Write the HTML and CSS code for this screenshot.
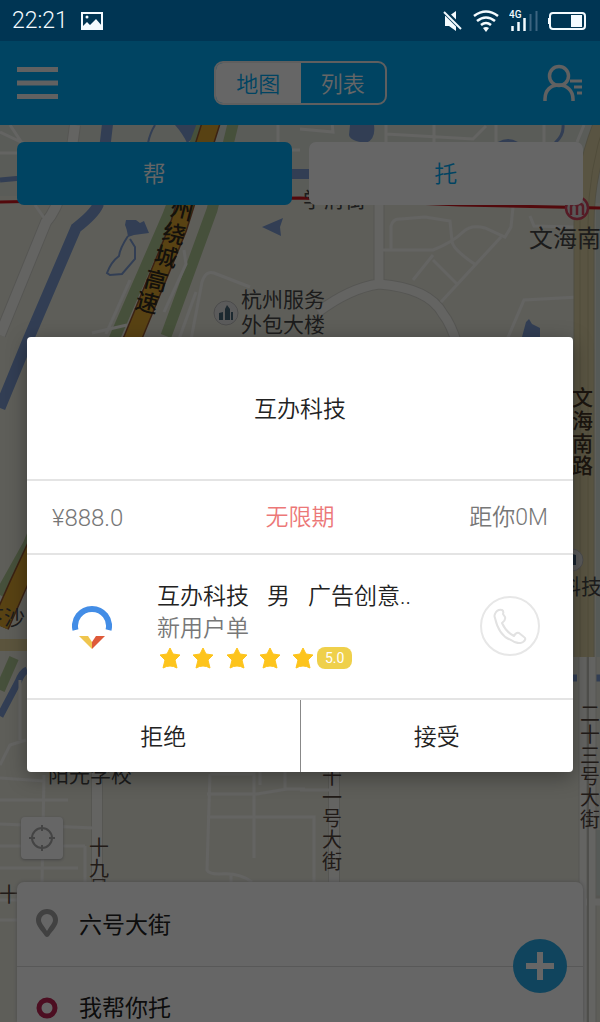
FILE: index.html
```html
<!DOCTYPE html>
<html lang="zh-CN">
<head>
<meta charset="utf-8">
<meta name="viewport" content="width=device-width, initial-scale=1">
<title>互办</title>
<link rel="stylesheet" href="styles.css">
</head>
<body>
<div class="phone">
  <div class="status">
    <div class="status-group">
      <span class="clock">22:21</span>
      <svg class="icon" width="22" height="18" viewBox="0 0 22 18" aria-hidden="true">
        <rect x="1" y="1" width="20" height="16" fill="none" stroke="currentColor" stroke-width="2"/>
        <path d="M2 17v-3l4-4 3 3 6-6 6 7v3z" fill="currentColor"/>
        <circle cx="6" cy="5" r="1.500" fill="currentColor"/>
      </svg>
    </div>
    <div class="status-group status-right">
      <svg width="20" height="22" viewBox="0 0 20 22" aria-hidden="true">
        <path d="M2 6h4l7-5v20l-7-5H2z" fill="currentColor"/>
        <path d="M0 0l19 19" stroke="#003553" stroke-width="5"/>
        <path d="M1 2l17 17" stroke="currentColor" stroke-width="2"/>
      </svg>
      <svg width="28" height="22" viewBox="0 0 28 22" aria-hidden="true">
        <g fill="none" stroke="currentColor" stroke-width="2.6">
          <path d="M2 6q12-9 24 0M5 11q9-7 18 0M9 15q5-4 10 0"/>
        </g>
        <path d="M11 18q3-2 6 0l-3 4z" fill="currentColor"/>
      </svg>
      <svg width="30" height="22" viewBox="0 0 30 22" aria-hidden="true">
        <text x="0" y="8" class="net">4G</text>
        <path d="M3.500 21v-5M9.500 21v-9M15.500 21V8" stroke="currentColor" stroke-width="2.500"/>
        <path d="M21.500 21V4M27.500 21V1" stroke="#3d6480" stroke-width="2"/>
      </svg>
      <svg width="38" height="20" viewBox="0 0 38 20" aria-hidden="true">
        <rect x="2" y="2" width="35" height="16" rx="3" fill="none" stroke="currentColor" stroke-width="2"/>
        <path d="M0 7h2v6H0zM23 4h11v12H23z" fill="currentColor"/>
      </svg>
    </div>
  </div>

  <div class="app">
    <header class="bar">
      <button class="icon-btn" aria-label="菜单">
        <svg width="41" height="32" viewBox="0 0 41 32"><path d="M0 2.500h41M0 16h41M0 29.500h41" stroke="currentColor" stroke-width="5"/></svg>
      </button>
      <div class="switch">
        <button class="switch-item is-on">地图</button>
        <button class="switch-item">列表</button>
      </div>
      <button class="icon-btn" aria-label="联系人">
        <svg width="40" height="38" viewBox="0 0 40 38" fill="none" stroke="currentColor" stroke-width="3.500">
          <circle cx="16" cy="12" r="9.500"/>
          <path d="M2 37v-2C2 26 8 21 16 21s14 6 14 14v2"/>
          <path d="M27 17h12M31 23h8M34 29h5" stroke-width="3"/>
        </svg>
      </button>
    </header>

    <main class="map-area">
      <svg class="map" viewBox="0 125 600 897" preserveAspectRatio="xMidYMin slice" aria-hidden="true">
        <rect y="125" width="600" height="897" fill="#ebebdf"/>
        <path d="M0 125h600v78H0z" fill="#e0e5dc"/>
        <path d="M0 196h280l320 8v6L0 210z" fill="#ebebdf"/>
        <g fill="none" stroke="#7d9cd2">
          <path d="M108 120L98 205Q94 214 76 228L28 340 0 408" stroke-width="11"/>
          <path d="M0 180l22-2" stroke-width="5"/>
          <path d="M288 174h24" stroke-width="10"/>
          <path d="M155 125q-5 8-7 18M128 236q-8 12-9 20-8 6-12 17l3 2 12-1 13-15v-12l-5-8" stroke-width="2"/>
          <path d="M27 670Q22 672 18 682L0 716" stroke-width="7"/>
          <path d="M572 678h5M592 678h8" stroke-width="7"/>
          <path d="M563 125q1 10-8 18" stroke-width="3"/>
        </g>
        <g fill="#7d9cd2">
          <path d="M175 125h22q-2 14-10 18-4-9-12-18zM350 125h24q2 14-8 18-16-2-17-8zM498 142q10-6 20 0zM583 158h6v12l-6 3zM126 220h10l4 3 4-2 5 12-15 2-6 2q-1-8-3-12zM262 227l21-9-3 9 1 9zM526 322l3-3 3 5 8 4v9h-18z"/>
        </g>
        <g fill="none" stroke="#b0c793">
          <path d="M204 120L168 215 118 330 28 545 0 595" stroke-width="11"/>
          <path d="M234 120L212 210 166 336" stroke-width="11"/>
          <path d="M14 658L0 690" stroke-width="10"/>
        </g>
        <g fill="none" class="casing">
          <path d="M75 125Q66 200 46 222L0 335" stroke-width="12"/>
          <path d="M379 205v80M318 312Q350 288 379 284q50 4 64 30 8 10 14 30" stroke-width="11"/>
          <path d="M97 765v120M334 770v115" stroke-width="12"/>
        </g>
        <g fill="none" class="street">
          <path d="M75 125Q66 200 46 222L0 335" stroke-width="10"/>
          <path d="M379 205v80M318 312Q350 288 379 284q50 4 64 30 8 10 14 30" stroke-width="9"/>
          <path d="M97 765v120M334 770v115" stroke-width="10"/>
        </g>
        <g fill="none" class="street" stroke-width="3">
          <path d="M0 153h80M0 132q20 10 40 18M10 125l20 30M278 125v25h22M300 129l33 3-1-10M386 125v20M386 134l87 5 13-13M434 125v20M496 125v20M544 125v20M577 142l7-17"/>
          <path d="M391 250v-24q2-8 10-7l24-2 25 4 2 20q0 8 24 24M383 250h50q20-8 30-18 8-8 22-4l20 9 6-10 2-20M501 237l-60 65M413 280l20-25M433 260l24 24M530 216l4 10 40 1M506 342l18-42 55-3"/>
          <path d="M190 345l12-63q4-12 12-9l36 14M130 280L106 334M184 250l2 14-22 48M196 292l-18 50M92 333l35-8M35 205l12 17"/>
          <path d="M0 778l45 3M0 800h68M44 775L42 883M0 824l94 4M0 846h85M0 868h78M85 846v38M0 900h18M0 920h18"/>
          <path d="M210 774l-3 96q2 4 12 4 20-2 33 8M210 774h44v84M207 794h50l30-5h18M207 817h93M285 770v20M260 770v15M231 875v10M300 817h14v66M300 790h34"/>
          <path d="M0 765l10-20 16-5M20 680v60"/>
        </g>
        <path d="M212 120L178 228 132 340 18 585 0 626" fill="none" stroke="#935530" stroke-width="19"/>
        <path d="M212 120L178 228 132 340 18 585 0 626" fill="none" stroke="#dba631" stroke-width="16"/>
        <path d="M0 645h27" stroke="#e3d19a" stroke-width="12"/>
        <path d="M606 118Q584 170 584 224v433" fill="none" stroke="#c6c0a1" stroke-width="21"/>
        <path d="M606 118Q584 170 584 224v433" fill="none" stroke="#dfd3a5" stroke-width="19"/>
        <path d="M606 118Q588 170 588 224v433M580 220v437" fill="none" stroke="#c8bd92" stroke-width="1"/>
        <path d="M596 210h4v447h-4zM596 830h4v66h-4z" fill="#d6e0da"/>
        <g fill="none" class="casing" stroke-width="9">
          <path d="M583 657v365M592 657v365M580 900h20"/>
        </g>
        <g fill="none" class="street" stroke-width="7">
          <path d="M583 657v365M592 657v365M583 902h17"/>
        </g>
        <path d="M588 657v365" stroke="#c5c5bd" stroke-width="2"/>
        <path d="M0 202l50-1 250-3 160 7 140 3" fill="none" stroke="#cf1820" stroke-width="3"/>
        <g fill="none" stroke="#d5445e" stroke-width="2.500">
          <circle cx="577" cy="208" r="11" fill="#ddd"/>
          <path d="M571 215v-8q0-3 3-3t3 3v8M577 207q0-3 3-3t3 3v8"/>
        </g>
        <g>
          <circle cx="226" cy="313" r="12" fill="#e4e4e4" stroke="#bbb" stroke-width="1"/>
          <path d="M219 320v-7l4-1v8zM225 320v-11l2-4 3 4v11zM231 320v-8h2v8z" fill="#486678"/>
          <circle cx="572" cy="560" r="11" fill="#e4e4e4" stroke="#bbb" stroke-width="1"/>
          <path d="M572 554l4 1v10h-4z" fill="#3c5875"/>
        </g>
        <g class="place">
          <text x="241" y="307">杭州服务</text>
          <text x="241" y="332">外包大楼</text>
          <text x="48" y="782">阳光学校</text>
          <text x="303" y="207">学府街</text>
          <text x="560" y="594">科技</text>
          <text x="-17" y="625">下沙</text>
          <text x="529" y="247" class="station">文海南</text>
        </g>
        <g class="highway">
          <text transform="translate(169 215) rotate(14)">州</text>
          <text transform="translate(161 239) rotate(14)">绕</text>
          <text transform="translate(153 262) rotate(14)">城</text>
          <text transform="translate(143 286) rotate(14)">高</text>
          <text transform="translate(134 308) rotate(14)">速</text>
        </g>
        <g class="road">
          <text class="major" x="572" y="405">文</text><text class="major" x="572" y="428">海</text><text class="major" x="572" y="451">南</text><text class="major" x="572" y="473">路</text>
          <text x="580" y="721">二</text><text x="580" y="742">十</text><text x="580" y="763">三</text><text x="580" y="784">号</text><text x="580" y="805">大</text><text x="580" y="827">街</text>
          <text x="322" y="784">十</text><text x="322" y="805">一</text><text x="322" y="826">号</text><text x="322" y="847">大</text><text x="322" y="869">街</text>
          <text x="89" y="855">十</text><text x="89" y="876">九</text><text x="89" y="896">号</text><text x="-1" y="902">十</text>
        </g>
      </svg>

      <div class="tabs">
        <button class="tab is-on">帮</button>
        <button class="tab">托</button>
      </div>

      <div class="bottom">
        <button class="locate" aria-label="定位">
          <svg width="26" height="26" viewBox="0 0 26 26" fill="none" stroke="currentColor" stroke-width="2">
            <circle cx="13" cy="13" r="10"/><path d="M13 0v6M13 20v6M0 13h6M20 13h6"/>
          </svg>
        </button>
        <div class="sheet">
          <div class="row">
            <svg width="22" height="28" viewBox="0 0 22 28" aria-hidden="true"><path fill-rule="evenodd" fill="#a2a2a2" d="M11 0A11 11 0 0 1 22 11c0 6-5 10-9 16q-2 2-4 0C5 21 0 17 0 11A11 11 0 0 1 11 0zM11 5a6 6 0 0 0-6 6c0 3 3 6 6 11 3-5 6-8 6-11a6 6 0 0 0-6-6z"/></svg>
            <span>六号大街</span>
          </div>
          <div class="row">
            <svg width="22" height="22" viewBox="0 0 22 22" aria-hidden="true"><circle cx="11" cy="11" r="8" fill="none" stroke="#bd2453" stroke-width="5"/></svg>
            <span>我帮你托</span>
          </div>
          <button class="fab" aria-label="新增">
            <svg width="28" height="28" viewBox="0 0 28 28"><path d="M14 0v28M0 14h28" stroke="currentColor" stroke-width="6"/></svg>
          </button>
        </div>
      </div>
    </main>

    <div class="overlay">
      <section class="dialog" role="dialog" aria-labelledby="order-title">
        <h1 class="title" id="order-title">互办科技</h1>
        <div class="facts">
          <span class="price">¥888.0</span>
          <span class="limit">无限期</span>
          <span class="distance">距你0M</span>
        </div>
        <div class="user">
          <svg class="avatar" width="40" height="48" viewBox="0 0 40 48" aria-hidden="true">
            <path d="M3.500 28A17 17 0 1 1 36.500 28" fill="none" stroke="#438de6" stroke-width="6"/>
            <path d="M7 34h9l4 6v7z" fill="#efc54e"/>
            <path d="M33 34h-9l-4 6v7z" fill="#de5a3a"/>
          </svg>
          <div class="info">
            <p class="name"><span>互办科技</span><span>男</span><span>广告创意..</span></p>
            <p class="note">新用户单</p>
            <div class="rating">
              <svg class="stars" width="156" height="22" viewBox="0 0 156 22" aria-hidden="true">
                <defs><path id="star" d="M11 1l3 6 7 1-5 5 2 8q-7-4-14 0l2-8-5-5 7-1z" fill="#fdc41c" stroke="#fdc41c" stroke-width="1" stroke-linejoin="round"/></defs>
                <use href="#star" x="2"/><use href="#star" x="35"/><use href="#star" x="69"/><use href="#star" x="102"/><use href="#star" x="135"/>
              </svg>
              <span class="score">5.0</span>
            </div>
          </div>
          <button class="call" aria-label="拨打电话">
            <svg width="34" height="36" viewBox="0 0 34 36" fill="none" stroke="currentColor" stroke-width="2" stroke-linejoin="round">
              <path d="M2 6Q4 1 9 2q2 1 1 4l2 3q1 3-3 6 4 9 12 13 2-4 5-3l5 4q3 2-1 5-5 3-12-2C9 29 4 19 2 10q-1-2 0-4z"/>
            </svg>
          </button>
        </div>
        <div class="actions">
          <button class="action">拒绝</button>
          <button class="action">接受</button>
        </div>
      </section>
    </div>
  </div>
</div>
</body>
</html>
```
FILE: styles.css
```css
* { box-sizing: border-box; }

body {
  margin: 0;
  font-family: Roboto, "Noto Sans CJK SC", sans-serif;
  font-size: 23px;
  color: #222;
}

button {
  margin: 0;
  padding: 0;
  border: 0;
  background: none;
  font: inherit;
  color: inherit;
}

svg { display: block; }
p, h1 { margin: 0; }

.phone {
  display: flex;
  flex-direction: column;
  min-height: 100vh;
}

.status {
  display: flex;
  align-items: center;
  justify-content: space-between;
  height: 41px;
  padding: 0 14px 0 12px;
  background: #003553;
  color: #f4fbff;
}

.status-group {
  display: flex;
  align-items: center;
  gap: 13px;
}

.status-right { gap: 9px; }
.clock { font-size: 23px; font-weight: 350; }
.net { font-size: 10px; font-weight: 500; fill: currentColor; }

.app {
  position: relative;
  display: flex;
  flex: 1;
  flex-direction: column;
}

.bar {
  display: flex;
  align-items: center;
  justify-content: space-between;
  height: 84px;
  padding: 0 17px;
  background: #00aaf6;
  color: #fff;
}

.icon-btn { color: #f2f2f2; }

.switch {
  display: flex;
  width: 173px;
  height: 44px;
  overflow: hidden;
  border: 2px solid #eee;
  border-radius: 9px;
  font-size: 22px;
  font-weight: 350;
}

.switch-item {
  flex: 1;
  padding-bottom: 3px;
}

.switch-item.is-on { background: #fff; color: #00aaf6; }

.map-area {
  position: relative;
  display: flex;
  flex: 1;
  flex-direction: column;
  justify-content: space-between;
  padding: 17px 17px 0;
}

.map {
  position: absolute;
  inset: 0;
  width: 100%;
  height: 100%;
}

.street { stroke: #f9f9f6; }
.casing { stroke: #d6d6ce; }

.place { font-size: 21px; fill: #484848; }
.place .station { font-size: 24px; }
.highway { font-size: 23px; font-weight: 500; fill: #332b20; }
.road { font-size: 20px; fill: #54453c; }
.road .major { font-size: 21px; font-weight: 500; fill: #443527; }

.tabs {
  position: relative;
  display: flex;
  gap: 17px;
}

.tab {
  flex: 1;
  height: 63px;
  padding-bottom: 3px;
  border-radius: 7px;
  background: #fff;
  color: #00aaf6;
  font-weight: 350;
}

.tab.is-on { background: #00aaf6; color: #fff; }

.bottom { position: relative; }

.locate {
  display: grid;
  place-items: center;
  width: 42px;
  height: 42px;
  margin: 0 0 23px 4px;
  border-radius: 4px;
  background: #fff;
  color: #aaa;
  box-shadow: 0 1px 3px #aaa;
}

.sheet {
  position: relative;
  border-radius: 7px 7px 0 0;
  background: #fff;
  box-shadow: 0 0 4px #bbb;
}

.row {
  display: flex;
  align-items: center;
  gap: 21px;
  height: 84px;
  padding: 0 19px 3px;
}

.row + .row {
  align-items: flex-start;
  height: 56px;
  padding-top: 26px;
  border-top: 1px solid #dcdcdc;
  line-height: 32px;
}

.row + .row svg { margin-top: 4px; }

.fab {
  position: absolute;
  top: 57px;
  right: 16px;
  display: grid;
  place-items: center;
  width: 54px;
  height: 54px;
  border-radius: 50%;
  background: #2aabe8;
  color: #fff;
}

.overlay {
  position: absolute;
  inset: 0;
  display: flex;
  align-items: center;
  padding: 46px 27px 0;
  background: rgba(0, 0, 0, .6);
}

.dialog {
  flex: 1;
  border-radius: 4px;
  background: #fff;
  box-shadow: 0 5px 20px rgba(0, 0, 0, .35);
}

.title {
  padding: 56px 0 52px;
  font-size: 23px;
  font-weight: 350;
  line-height: 34px;
  text-align: center;
}

.facts {
  display: grid;
  grid-template-columns: 1fr 1fr 1fr;
  padding: 20px 25px 18px;
  border: solid #e4e4e4;
  border-width: 2px 0;
  font-weight: 350;
  line-height: 34px;
  color: #777;
}

.price { font-size: 24px; }
.limit { text-align: center; color: #ec7878; }
.distance { text-align: right; }

.user {
  display: flex;
  align-items: center;
  height: 143px;
  padding: 0 33px 2px 45px;
}

.info {
  flex: 1;
  margin-left: 45px;
}

.name {
  display: flex;
  gap: 18px;
  font-weight: 350;
  line-height: 34px;
}

.note {
  font-weight: 350;
  line-height: 30px;
  color: #777;
}

.rating {
  display: flex;
  align-items: center;
  height: 28px;
}

.score {
  margin-left: 4px;
  padding: 0 8px;
  border-radius: 8px;
  background: #efd04b;
  color: #fff;
  font-size: 14px;
  line-height: 22px;
}

.call {
  display: grid;
  place-items: center;
  width: 60px;
  height: 60px;
  border: 2px solid #e7e7e7;
  border-radius: 50%;
  color: #e2e2e2;
}

.actions {
  display: flex;
  border-top: 2px solid #e4e4e4;
}

.action {
  flex: 1;
  height: 72px;
  padding-bottom: 3px;
  font-weight: 350;
}

.action + .action { border-left: 1px solid #888; }
```
